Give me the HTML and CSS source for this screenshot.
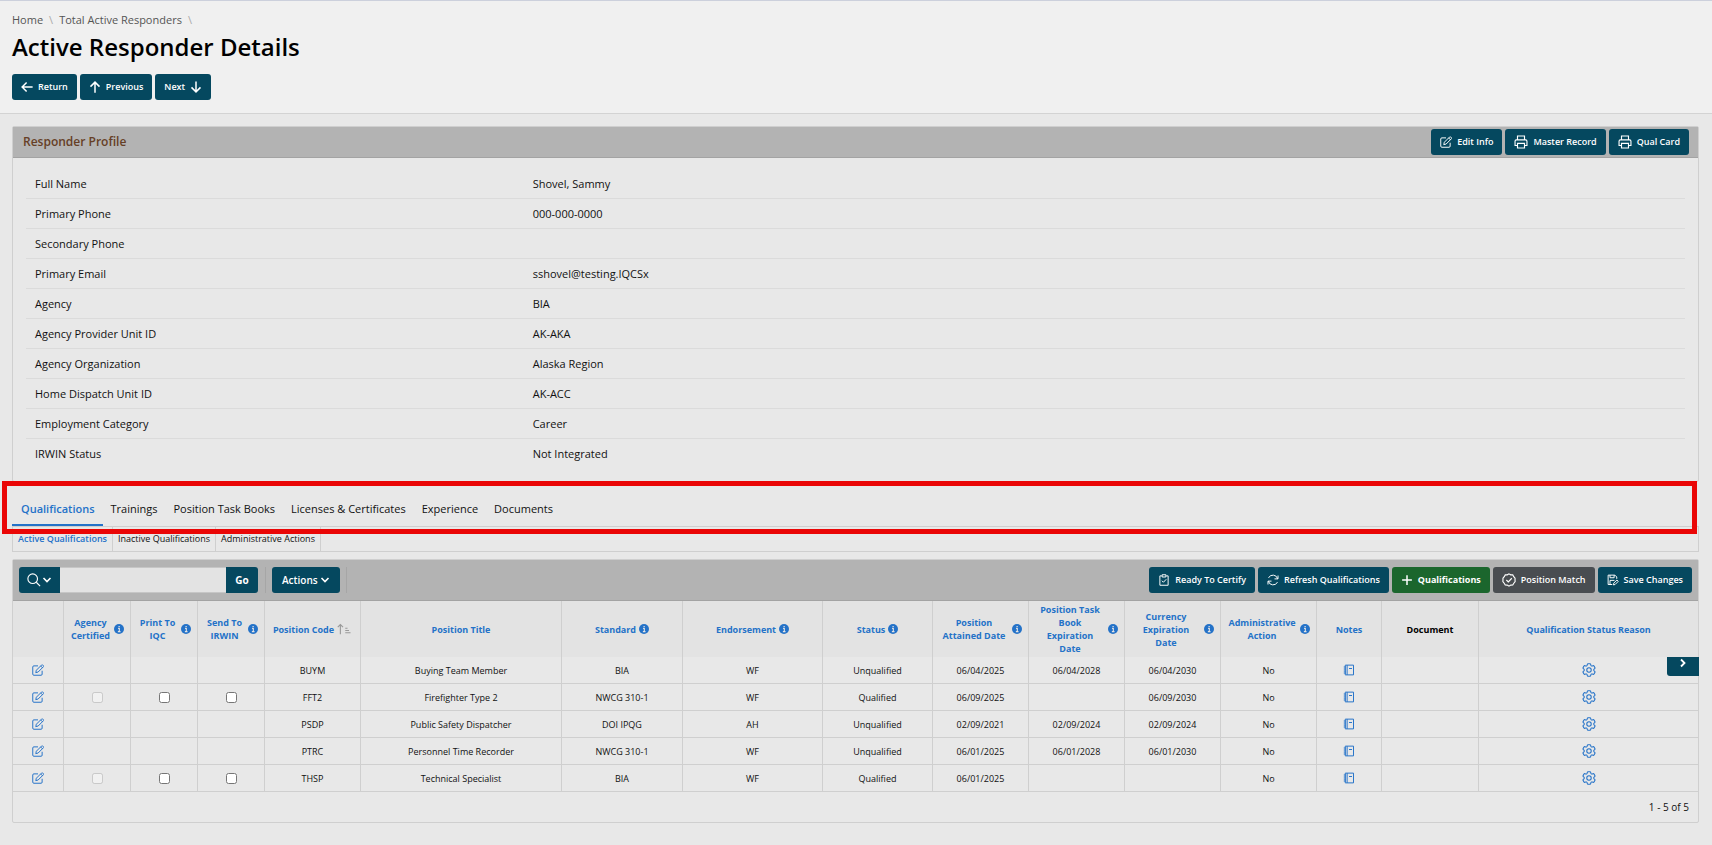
FILE: index.html
```html
<!DOCTYPE html>
<html lang="en">
<head>
  <meta charset="UTF-8" />
  <meta name="viewport" content="width=device-width, initial-scale=1.0" />
  <title>Active Responder Details</title>
  <link rel="stylesheet" href="styles.css">
</head>
<body>
  <!-- Icon set -->
  <svg class="icon-defs" aria-hidden="true">
    <symbol id="i-left" viewBox="0 0 16 16"><path d="M15.500 8H1.500M7.500 2L1.500 8l6 6" stroke-width="2" /></symbol>
    <symbol id="i-up" viewBox="0 0 16 16"><path d="M8 15.500V1.500M2 7.500l6-6 6 6" stroke-width="2" /></symbol>
    <symbol id="i-down" viewBox="0 0 16 16"><path d="M8 .5v14M2 8.500l6 6 6-6" stroke-width="2" /></symbol>
    <symbol id="i-edit" viewBox="0 0 16 16"><path d="M8 2.500H2.500A1.500 1.500 0 0 0 1 4v9.500A1.500 1.500 0 0 0 2.500 15H12a1.500 1.500 0 0 0 1.500-1.500V9M5 11.500l.8-3.200 7-7a1 1 0 0 1 1.400 0l1 1a1 1 0 0 1 0 1.400l-7 7zM11.500 2.600l2.400 2.400" /></symbol>
    <symbol id="i-print" viewBox="0 0 16 16"><path d="M4 5.500V1.200h8v4.300M4 12H1.200V7A1.500 1.500 0 0 1 2.700 5.500h10.600A1.500 1.500 0 0 1 14.800 7v5H12M4 9.500h8v5.300H4z" /></symbol>
    <symbol id="i-search" viewBox="0 0 16 16"><circle cx="6.500" cy="6.500" r="5.500" /><path d="M10.600 10.600L15 15" /></symbol>
    <symbol id="i-chevron-down" viewBox="0 0 10 10"><path d="M1.500 3l3.500 3.500L8.500 3" stroke-width="1.600" /></symbol>
    <symbol id="i-chevron-right" viewBox="0 0 10 10"><path d="M3 1.500L6.500 5 3 8.500" stroke-width="1.800" /></symbol>
    <symbol id="i-clipboard" viewBox="0 0 16 16"><path d="M5 2.500H2.500v12.500h11V2.500h-2.500M5.500 1h5v3h-5zM5.200 9l2 2 3.800-4" /></symbol>
    <symbol id="i-refresh" viewBox="0 0 16 16"><path d="M14.200 6.500A6.500 6.500 0 0 0 2 5.200M1.800 9.500a6.500 6.500 0 0 0 12.200 1.300M14.700 2v4.500H10M1.300 14V9.500H6" /></symbol>
    <symbol id="i-plus" viewBox="0 0 16 16"><path d="M8 1.500v13M1.500 8h13" stroke-width="2" /></symbol>
    <symbol id="i-badge" viewBox="0 0 16 16"><path d="M8 1l2 1.100 2.300.1 1.100 2L14.900 6v2l.1 1.800-1.500 1.900-1.200 2-2.300.1L8 15l-2-1.200-2.300-.1-1.200-2L1 9.800 1.100 8V6l1.500-1.800 1.100-2L6 2.100zM5 8l2.200 2.200L11.200 6" /></symbol>
    <symbol id="i-save" viewBox="0 0 16 16"><path d="M7 14H1.500V1.500h9L13 4v2.500M4 1.500v3.500h5.500V1.500M4 14V8.500h6M8.500 14.500l.5-2.300 4.200-4.200 1.800 1.800-4.200 4.200z" /></symbol>
    <symbol id="i-info" viewBox="0 0 16 16"><circle cx="8" cy="8" r="8" fill="currentColor" stroke="none" /><path d="M6.500 7H8.500v5M6.200 12.200h4.200M7.200 4h2" stroke="#e3e3e3" stroke-width="1.800" /></symbol>
    <symbol id="i-sort" viewBox="0 0 20 16"><path d="M4.500 15V2M1 5.500L4.500 2 8 5.500M11 7h3M11 10h5M11 13h7" stroke-width="1.500" /></symbol>
    <symbol id="i-note" viewBox="0 0 16 16"><path d="M3 1.500h11v13H3zM5.500 1.500v13M1 4h3M1 6.700h3M1 9.400h3M1 12h3M8 6h4" /></symbol>
    <symbol id="i-gear" viewBox="2 2 20 20"><path stroke-width="1.500" d="M9.594 3.940c.09-.542.56-.94 1.110-.94h2.593c.55 0 1.020.398 1.110.94l.213 1.281c.063.374.313.686.645.87.074.04.147.083.22.127.325.196.72.257 1.075.124l1.217-.456a1.125 1.125 0 0 1 1.370.49l1.296 2.247a1.125 1.125 0 0 1-.26 1.431l-1.003.827c-.293.241-.438.613-.43.992a7.723 7.723 0 0 1 0 .255c-.008.378.137.75.43.991l1.004.827c.424.35.534.955.26 1.430l-1.298 2.247a1.125 1.125 0 0 1-1.369.491l-1.217-.456c-.355-.133-.75-.072-1.076.124a6.470 6.470 0 0 1-.22.128c-.331.183-.581.495-.644.869l-.213 1.281c-.09.543-.56.94-1.110.94h-2.594c-.55 0-1.019-.398-1.110-.94l-.213-1.281c-.062-.374-.312-.686-.644-.87a6.520 6.520 0 0 1-.22-.127c-.325-.196-.72-.257-1.076-.124l-1.217.456a1.125 1.125 0 0 1-1.369-.49l-1.297-2.247a1.125 1.125 0 0 1 .26-1.431l1.004-.827c.292-.24.437-.613.43-.991a6.932 6.932 0 0 1 0-.255c.007-.38-.138-.751-.43-.992l-1.004-.827a1.125 1.125 0 0 1-.26-1.430l1.297-2.247a1.125 1.125 0 0 1 1.370-.491l1.216.456c.356.133.751.072 1.076-.124.072-.044.146-.086.22-.128.332-.183.582-.495.644-.869z" /><circle cx="12" cy="12" r="3.200" stroke-width="1.500" /></symbol>
  </svg>

  <header>
    <nav class="breadcrumb" aria-label="Breadcrumb">
      <a href="#">Home</a><i>\</i><a href="#">Total Active Responders</a><i>\</i>
    </nav>
    <h1>Active Responder Details</h1>
    <div class="btn-row">
      <button type="button" class="btn"><svg class="icon"><use href="#i-left" /></svg>Return</button>
      <button type="button" class="btn"><svg class="icon"><use href="#i-up" /></svg>Previous</button>
      <button type="button" class="btn">Next<svg class="icon"><use href="#i-down" /></svg></button>
    </div>
  </header>

  <main>
    <section class="panel profile">
      <div class="panel-header">
        <h2>Responder Profile</h2>
        <div class="btn-row">
          <button type="button" class="btn"><svg class="icon"><use href="#i-edit" /></svg>Edit Info</button>
          <button type="button" class="btn"><svg class="icon wide"><use href="#i-print" /></svg>Master Record</button>
          <button type="button" class="btn"><svg class="icon wide"><use href="#i-print" /></svg>Qual Card</button>
        </div>
      </div>
      <dl class="details">
        <div><dt>Full Name</dt><dd>Shovel, Sammy</dd></div>
        <div><dt>Primary Phone</dt><dd>000-000-0000</dd></div>
        <div><dt>Secondary Phone</dt><dd></dd></div>
        <div><dt>Primary Email</dt><dd>sshovel@testing.IQCSx</dd></div>
        <div><dt>Agency</dt><dd>BIA</dd></div>
        <div><dt>Agency Provider Unit ID</dt><dd>AK-AKA</dd></div>
        <div><dt>Agency Organization</dt><dd>Alaska Region</dd></div>
        <div><dt>Home Dispatch Unit ID</dt><dd>AK-ACC</dd></div>
        <div><dt>Employment Category</dt><dd>Career</dd></div>
        <div><dt>IRWIN Status</dt><dd>Not Integrated</dd></div>
      </dl>
    </section>

    <nav class="tabs" aria-label="Responder sections">
      <a href="#" class="tab active">Qualifications</a>
      <a href="#" class="tab">Trainings</a>
      <a href="#" class="tab">Position Task Books</a>
      <a href="#" class="tab">Licenses &amp; Certificates</a>
      <a href="#" class="tab">Experience</a>
      <a href="#" class="tab">Documents</a>
      <div class="highlight"></div>
    </nav>

    <nav class="subtabs" aria-label="Qualification views">
      <a href="#" class="active">Active Qualifications</a>
      <a href="#">Inactive Qualifications</a>
      <a href="#">Administrative Actions</a>
    </nav>

    <section class="panel report">
      <div class="toolbar">
        <div class="search">
          <button type="button" class="btn" aria-label="Search columns"><svg class="icon wide"><use href="#i-search" /></svg><svg class="chevron"><use href="#i-chevron-down" /></svg></button>
          <input type="text" aria-label="Search" />
          <button type="button" class="btn go">Go</button>
        </div>
        <div class="actions">
          <button type="button" class="btn">Actions<svg class="chevron"><use href="#i-chevron-down" /></svg></button>
        </div>
        <div class="btn-row">
          <button type="button" class="btn"><svg class="icon"><use href="#i-clipboard" /></svg>Ready To Certify</button>
          <button type="button" class="btn"><svg class="icon"><use href="#i-refresh" /></svg>Refresh Qualifications</button>
          <button type="button" class="btn green"><svg class="icon"><use href="#i-plus" /></svg>Qualifications</button>
          <button type="button" class="btn gray"><svg class="icon wide"><use href="#i-badge" /></svg>Position Match</button>
          <button type="button" class="btn"><svg class="icon"><use href="#i-save" /></svg>Save Changes</button>
        </div>
      </div>

      <div class="table-wrap">
        <table>
          <colgroup>
            <col class="c-edit"><col class="c-check"><col class="c-check"><col class="c-check"><col class="c-date">
            <col class="c-title"><col class="c-standard"><col class="c-endorse"><col class="c-status">
            <col class="c-date"><col class="c-date"><col class="c-date"><col class="c-date">
            <col class="c-notes"><col class="c-document"><col>
          </colgroup>
          <thead>
            <tr>
              <th></th>
              <th><div class="head"><a href="#">Agency Certified</a><svg class="info"><use href="#i-info" /></svg></div></th>
              <th><div class="head"><a href="#">Print To IQC</a><svg class="info"><use href="#i-info" /></svg></div></th>
              <th><div class="head"><a href="#">Send To IRWIN</a><svg class="info"><use href="#i-info" /></svg></div></th>
              <th><div class="head"><a href="#" class="nowrap">Position Code</a><svg class="sort"><use href="#i-sort" /></svg></div></th>
              <th><div class="head"><a href="#">Position Title</a></div></th>
              <th><div class="head"><a href="#">Standard</a><svg class="info"><use href="#i-info" /></svg></div></th>
              <th><div class="head"><a href="#">Endorsement</a><svg class="info"><use href="#i-info" /></svg></div></th>
              <th><div class="head"><a href="#">Status</a><svg class="info"><use href="#i-info" /></svg></div></th>
              <th><div class="head spread"><a href="#">Position<br>Attained Date</a><svg class="info"><use href="#i-info" /></svg></div></th>
              <th><div class="head spread"><a href="#">Position Task<br>Book<br>Expiration<br>Date</a><svg class="info"><use href="#i-info" /></svg></div></th>
              <th><div class="head spread"><a href="#">Currency<br>Expiration<br>Date</a><svg class="info"><use href="#i-info" /></svg></div></th>
              <th><div class="head spread"><a href="#">Administrative Action</a><svg class="info"><use href="#i-info" /></svg></div></th>
              <th><div class="head"><a href="#">Notes</a></div></th>
              <th>Document</th>
              <th><div class="head"><a href="#">Qualification Status Reason</a></div></th>
            </tr>
          </thead>
          <tbody>
            <tr>
              <td><a href="#" aria-label="Edit BUYM"><svg class="icon"><use href="#i-edit" /></svg></a></td>
              <td></td>
              <td></td>
              <td></td>
              <td>BUYM</td>
              <td>Buying Team Member</td>
              <td>BIA</td>
              <td>WF</td>
              <td>Unqualified</td>
              <td>06/04/2025</td>
              <td>06/04/2028</td>
              <td>06/04/2030</td>
              <td>No</td>
              <td><a href="#" aria-label="Notes"><svg class="icon"><use href="#i-note" /></svg></a></td>
              <td></td>
              <td><a href="#" aria-label="Status reason"><svg class="icon wide"><use href="#i-gear" /></svg></a></td>
            </tr>
            <tr>
              <td><a href="#" aria-label="Edit FFT2"><svg class="icon"><use href="#i-edit" /></svg></a></td>
              <td><input type="checkbox" aria-label="Agency Certified" disabled /></td>
              <td><input type="checkbox" aria-label="Print To IQC" /></td>
              <td><input type="checkbox" aria-label="Send To IRWIN" /></td>
              <td>FFT2</td>
              <td>Firefighter Type 2</td>
              <td>NWCG 310-1</td>
              <td>WF</td>
              <td>Qualified</td>
              <td>06/09/2025</td>
              <td></td>
              <td>06/09/2030</td>
              <td>No</td>
              <td><a href="#" aria-label="Notes"><svg class="icon"><use href="#i-note" /></svg></a></td>
              <td></td>
              <td><a href="#" aria-label="Status reason"><svg class="icon wide"><use href="#i-gear" /></svg></a></td>
            </tr>
            <tr>
              <td><a href="#" aria-label="Edit PSDP"><svg class="icon"><use href="#i-edit" /></svg></a></td>
              <td></td>
              <td></td>
              <td></td>
              <td>PSDP</td>
              <td>Public Safety Dispatcher</td>
              <td>DOI IPQG</td>
              <td>AH</td>
              <td>Unqualified</td>
              <td>02/09/2021</td>
              <td>02/09/2024</td>
              <td>02/09/2024</td>
              <td>No</td>
              <td><a href="#" aria-label="Notes"><svg class="icon"><use href="#i-note" /></svg></a></td>
              <td></td>
              <td><a href="#" aria-label="Status reason"><svg class="icon wide"><use href="#i-gear" /></svg></a></td>
            </tr>
            <tr>
              <td><a href="#" aria-label="Edit PTRC"><svg class="icon"><use href="#i-edit" /></svg></a></td>
              <td></td>
              <td></td>
              <td></td>
              <td>PTRC</td>
              <td>Personnel Time Recorder</td>
              <td>NWCG 310-1</td>
              <td>WF</td>
              <td>Unqualified</td>
              <td>06/01/2025</td>
              <td>06/01/2028</td>
              <td>06/01/2030</td>
              <td>No</td>
              <td><a href="#" aria-label="Notes"><svg class="icon"><use href="#i-note" /></svg></a></td>
              <td></td>
              <td><a href="#" aria-label="Status reason"><svg class="icon wide"><use href="#i-gear" /></svg></a></td>
            </tr>
            <tr>
              <td><a href="#" aria-label="Edit THSP"><svg class="icon"><use href="#i-edit" /></svg></a></td>
              <td><input type="checkbox" aria-label="Agency Certified" disabled /></td>
              <td><input type="checkbox" aria-label="Print To IQC" /></td>
              <td><input type="checkbox" aria-label="Send To IRWIN" /></td>
              <td>THSP</td>
              <td>Technical Specialist</td>
              <td>BIA</td>
              <td>WF</td>
              <td>Qualified</td>
              <td>06/01/2025</td>
              <td></td>
              <td></td>
              <td>No</td>
              <td><a href="#" aria-label="Notes"><svg class="icon"><use href="#i-note" /></svg></a></td>
              <td></td>
              <td><a href="#" aria-label="Status reason"><svg class="icon wide"><use href="#i-gear" /></svg></a></td>
            </tr>
          </tbody>
        </table>
        <button type="button" class="side-toggle" aria-label="Expand side column"><svg class="chevron"><use href="#i-chevron-right" /></svg></button>
      </div>
      <div class="pagination">1 - 5 of 5</div>
    </section>
  </main>
</body>
</html>
```
FILE: styles.css
```css
:root {
  --primary: #05485f;
  --link: #2472c8;
  --bg: #e8e8e8;
  --bar: #b3b3b3;
  --border: #cfcfcf;
}

* {
  box-sizing: border-box;
}

body {
  margin: 0;
  font-family: "Open Sans", "Noto Sans", sans-serif;
  font-size: 11px;
  line-height: 16px;
  background-color: var(--bg);
  color: #111;
}

a {
  color: inherit;
  text-decoration: none;
}

svg {
  fill: none;
  stroke: currentColor;
  stroke-width: 1.3;
  flex: none;
}

.icon-defs {
  display: none;
}

.icon {
  width: 12px;
  height: 12px;
}

.icon.wide {
  width: 14px;
  height: 14px;
}

.chevron {
  width: 10px;
  height: 10px;
}

header {
  background-color: #f0f0f0;
  border-top: 1px solid #ccd0dc;
  border-bottom: 1px solid #d3d3d3;
  padding: 11px 12px 13px;
}

.breadcrumb {
  display: flex;
  gap: 6px;
  color: #555;
}

.breadcrumb i {
  font-style: normal;
  color: #aaa;
}

h1 {
  margin: 2px 0 11px;
  font-size: 24px;
  line-height: 33px;
  font-weight: 600;
  color: #000;
}

.btn-row {
  display: flex;
  gap: 3px;
}

.btn {
  display: flex;
  align-items: center;
  justify-content: center;
  gap: 5px;
  height: 26px;
  padding: 0 9px;
  font: 600 9px/16px "Open Sans", "Noto Sans", sans-serif;
  white-space: nowrap;
  color: #fff;
  background-color: var(--primary);
  border: none;
  border-radius: 3px;
  cursor: pointer;
}

.btn.green {
  font-weight: 700;
  background-color: #1b662d;
}

.btn.gray {
  background-color: #494d51;
}

main {
  padding: 12px 13px 12px 12px;
}

.panel {
  border: 1px solid var(--border);
  border-radius: 2px;
}

.panel-header {
  display: flex;
  align-items: center;
  justify-content: space-between;
  height: 31px;
  padding: 0 9px 0 10px;
  background-color: var(--bar);
  border-bottom: 1px solid #a3a3a3;
}

.panel-header h2 {
  margin: 0;
  font-size: 12px;
  font-weight: 600;
  color: #663f26;
}

.details {
  margin: 0;
  padding: 11px 13px 13px;
}

.details div {
  display: flex;
  padding: 7px 0 6px;
  border-bottom: 1px solid #dbdbdb;
}

.details div:last-child {
  border-bottom: none;
}

.details dt,
.details dd {
  margin: 0;
  padding-left: 9px;
}

.details dt {
  width: 30%;
}

/* Section tabs */
.tabs {
  position: relative;
  display: flex;
  height: 44px;
}

.tab {
  padding: 19px 8px 0;
  border-bottom: 2px solid transparent;
}

.tab.active {
  padding-left: 9px;
  font-weight: 600;
  color: var(--link);
  border-bottom-color: var(--link);
}

.highlight {
  position: absolute;
  z-index: 1;
  inset: -1px 2px -8px -10px;
  border: 5px solid #ea0606;
  pointer-events: none;
}

.subtabs {
  display: flex;
  margin-bottom: 7px;
  border: 1px solid var(--border);
  font-size: 9px;
  line-height: 24px;
}

.subtabs a {
  padding: 0 5px;
  border-right: 1px solid var(--border);
}

.subtabs .active {
  font-weight: 600;
  color: var(--link);
}

/* Report */
.toolbar {
  display: flex;
  align-items: center;
  height: 41px;
  padding: 0 6px;
  background-color: var(--bar);
  border-bottom: 1px solid #a3a3a3;
}

.search {
  display: flex;
}

.search .btn {
  width: 41px;
  padding: 0;
  gap: 1px;
  border-radius: 3px 0 0 3px;
}

.search .btn.go {
  width: 32px;
  border-radius: 0 3px 3px 0;
  font-size: 10px;
  font-weight: 700;
}

.search input {
  width: 166px;
  height: 26px;
  border: 1px solid #c6c6c6;
  border-width: 1px 0;
  background-color: #e3e3e3;
}

.actions {
  margin-left: 7px;
  padding: 0 6px;
  border: 1px solid #a6a6a6;
  border-width: 0 1px;
}

.actions .btn {
  padding: 0 10px;
  font-size: 10px;
  gap: 2px;
}

.toolbar .btn-row {
  margin-left: auto;
}

.table-wrap {
  position: relative;
}

table {
  width: 100%;
  table-layout: fixed;
  border-collapse: separate;
  border-spacing: 0;
  font-size: 9px;
  line-height: 13px;
}

.c-edit { width: 51px; }
.c-check { width: 67px; }
.c-date { width: 96px; }
.c-title { width: 201px; }
.c-standard { width: 121px; }
.c-endorse { width: 140px; }
.c-status { width: 110px; }
.c-notes { width: 65px; }
.c-document { width: 97px; }

th,
td {
  padding: 0;
  text-align: center;
  border-right: 1px solid var(--border);
}

th:last-child,
td:last-child {
  border-right: none;
}

th {
  height: 56px;
  background-color: #e3e3e3;
  color: #000;
}

td {
  height: 27px;
  border-bottom: 1px solid var(--border);
}

td a,
.head {
  color: var(--link);
}

td svg,
td input {
  display: block;
  margin: 0 auto;
}

td input {
  width: 11px;
  height: 11px;
}

.head {
  display: flex;
  align-items: center;
  justify-content: center;
  gap: 3px;
  padding: 0 6px;
}

.head.spread a {
  flex: 1;
}

.nowrap {
  white-space: nowrap;
}

.info {
  width: 10px;
  height: 10px;
}

.sort {
  width: 15px;
  height: 12px;
  color: #999;
}

/* Sits over the last column, just under the header row */
.side-toggle {
  position: absolute;
  top: 56px;
  right: -1px;
  display: flex;
  justify-content: center;
  width: 32px;
  height: 19px;
  padding: 1px 0 0;
  color: #fff;
  background-color: var(--primary);
  border: none;
  border-radius: 0 0 0 3px;
}

.pagination {
  padding: 7px 9px;
  font-size: 10px;
  text-align: right;
}
```
